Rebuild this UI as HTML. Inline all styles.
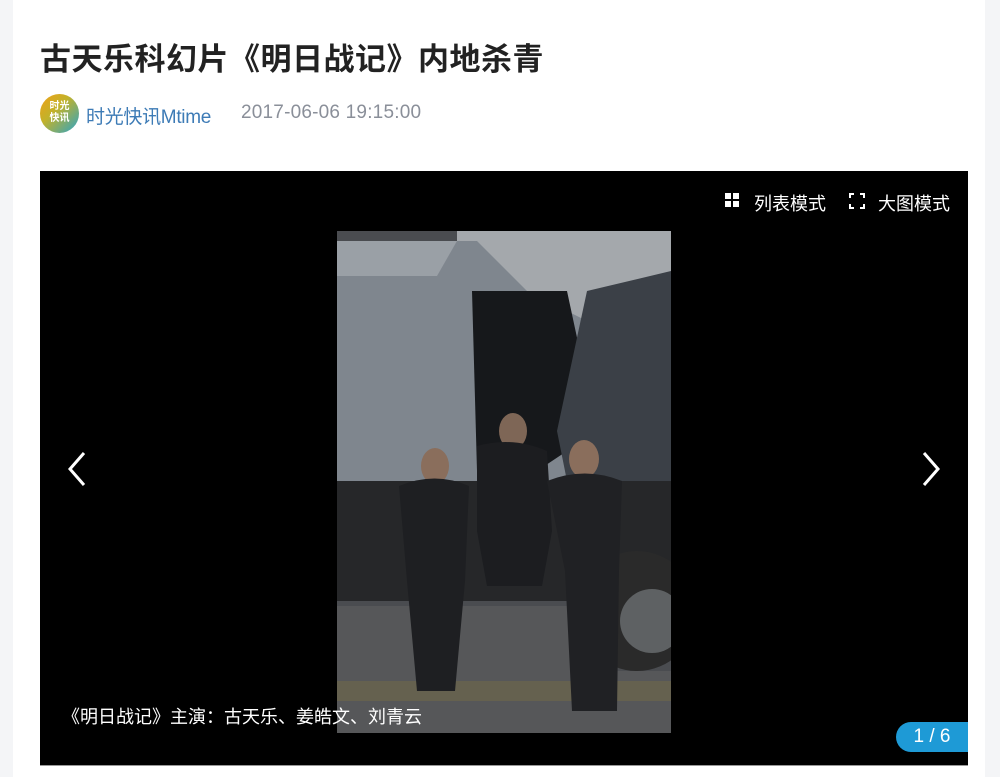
<!DOCTYPE html>
<html><head><meta charset="utf-8"><style>
body{margin:0;width:1000px;height:777px;background:#f4f5f7;font-family:"Liberation Sans","Noto Sans CJK SC",sans-serif;overflow:hidden;position:relative}
.card{position:absolute;left:13px;top:0;width:972px;height:777px;background:#fff}
h1{position:absolute;left:40px;top:34px;margin:0;font-size:31px;font-weight:bold;color:#222;letter-spacing:0.5px;font-family:"Liberation Sans","Noto Sans CJK SC",sans-serif}
.av{position:absolute;left:40px;top:94px;width:39px;height:39px;border-radius:50%;background:linear-gradient(135deg,#f0a018 0%,#c2b22a 40%,#2aa4c8 100%);color:#fff;font-size:10px;line-height:12px;text-align:center;padding-top:7px;box-sizing:border-box;font-weight:bold}
.name{position:absolute;left:86px;top:102px;font-size:19px;color:#3d7bb6;letter-spacing:-0.3px}
.date{position:absolute;left:241px;top:102px;font-size:19px;color:#8a8f99;letter-spacing:0.2px}
.box{position:absolute;left:40px;top:171px;width:928px;height:594px;background:#000;border-bottom:1px solid #999}
.top{position:absolute;color:#fff;font-size:18px;top:19px}
.cap{position:absolute;left:22px;top:532px;color:#fff;font-size:18px;z-index:2}
.pg{position:absolute;right:0;top:551px;width:72px;height:30px;background:#1e9ad6;border-radius:15px 0 0 15px;color:#fff;font-size:19px;line-height:30px;text-align:center}
</style></head><body>
<div class="card"></div>
<h1>古天乐科幻片《明日战记》内地杀青</h1>
<div class="av">时光<br>快讯</div>
<div class="name">时光快讯Mtime</div>
<div class="date">2017-06-06 19:15:00</div>
<div class="box">
 <svg style="position:absolute;left:685px;top:22px" width="14" height="14"><rect x="0" y="0" width="6" height="6" fill="#fff"/><rect x="8" y="0" width="6" height="6" fill="#fff"/><rect x="0" y="8" width="6" height="6" fill="#fff"/><rect x="8" y="8" width="6" height="6" fill="#fff"/></svg>
 <div class="top" style="left:714px">列表模式</div>
 <svg style="position:absolute;left:809px;top:22px" width="16" height="16" fill="none" stroke="#fff" stroke-width="2"><path d="M5 1H1V5M11 1H15V5M1 11V15H5M15 11V15H11"/></svg>
 <div class="top" style="left:838px">大图模式</div>
 <svg style="position:absolute;left:26px;top:280px" width="22" height="36" fill="none" stroke="#fff" stroke-width="3"><path d="M18 2L4 18L18 34"/></svg>
 <svg style="position:absolute;left:880px;top:280px" width="22" height="36" fill="none" stroke="#fff" stroke-width="3"><path d="M4 2L18 18L4 34"/></svg>
 <svg style="position:absolute;left:297px;top:60px" width="334" height="502" viewBox="0 0 334 502">
  <rect width="334" height="502" fill="#4a4c50"/>
  <rect x="120" y="0" width="214" height="100" fill="#a4a8ac"/>
  <path d="M0 10H140L190 60L250 90V280H0Z" fill="#7f868e"/>
  <path d="M0 10H120L100 45H0Z" fill="#9aa0a6"/>
  <path d="M135 60H230L260 200L200 240H140Z" fill="#16181b"/>
  <path d="M250 60L334 40V300H240L220 200Z" fill="#3b4047"/>
  <rect x="0" y="250" width="334" height="120" fill="#262729"/>
  <circle cx="300" cy="380" r="60" fill="#2a2a2a"/><circle cx="315" cy="390" r="32" fill="#5e6163"/>
  <rect x="0" y="375" width="240" height="127" fill="#565759"/>
  <rect x="240" y="440" width="94" height="62" fill="#565759"/>
  <path d="M0 450H334V470H0Z" fill="#6f684a" opacity=".6"/>
  <ellipse cx="98" cy="235" rx="14" ry="18" fill="#8a6e5c"/>
  <path d="M62 255Q98 240 132 255L128 350L118 460H80L70 350Z" fill="#1e1f22"/>
  <ellipse cx="176" cy="200" rx="14" ry="18" fill="#7e6656"/>
  <path d="M140 215Q176 205 210 220L215 300L205 355H150L140 300Z" fill="#1c1d20"/>
  <ellipse cx="247" cy="228" rx="15" ry="19" fill="#8a6e5c"/>
  <path d="M210 250Q248 235 285 250L282 340L280 480H235L228 340Z" fill="#202124"/>
 </svg>
 <div class="cap">《明日战记》主演：古天乐、姜皓文、刘青云</div>
 <div class="pg">1 / 6</div>
</div>
</body></html>
